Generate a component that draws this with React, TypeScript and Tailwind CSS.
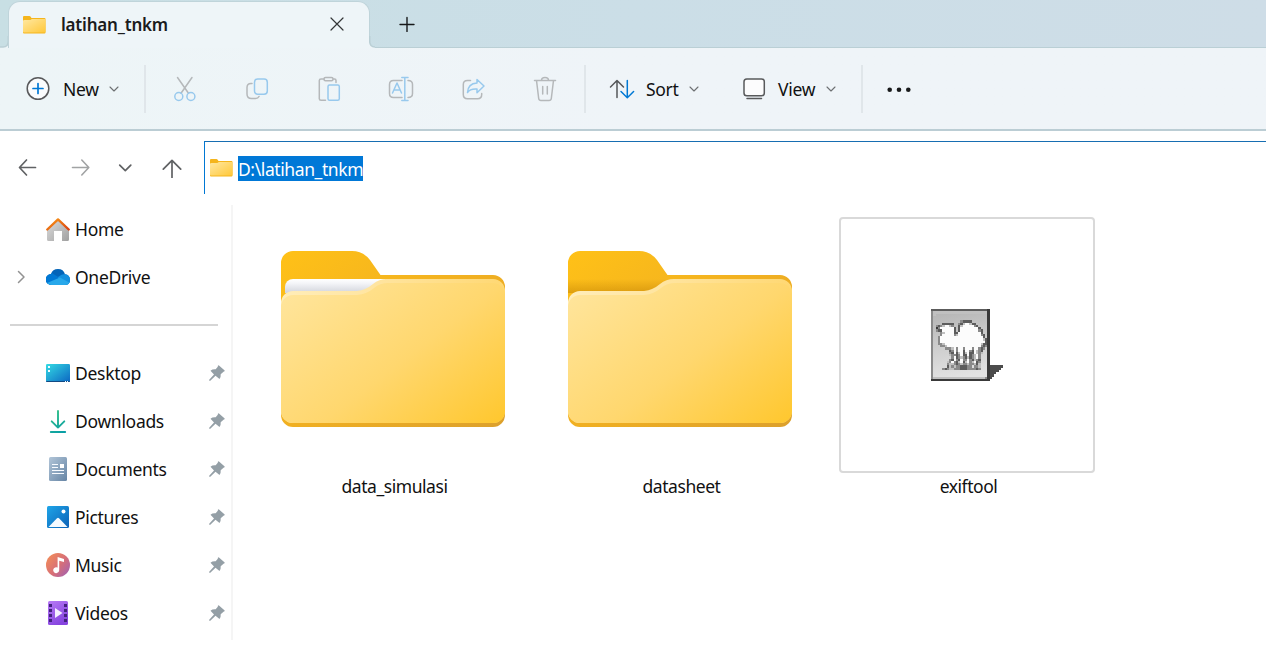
import type { ReactNode } from "react";

const BLUE = "#98c9ed";
const GRAY = "#b5b8ba";

function Glyph({ children, size = 26, className = "" }: { children: ReactNode; size?: number; className?: string }) {
  return (
    <svg
      width={size}
      height={size}
      viewBox={`${-size / 2} ${-size / 2} ${size} ${size}`}
      fill="none"
      strokeWidth="1.5"
      strokeLinecap="round"
      strokeLinejoin="round"
      className={"shrink-0 " + className}
    >
      {children}
    </svg>
  );
}

function Chevron({ className = "" }: { className?: string }) {
  return (
    <Glyph size={10} className={className}>
      <path d="M-4 -2 L0 2 L4 -2" stroke="#6d7072" strokeWidth="1.1" />
    </Glyph>
  );
}

function SmallFolder() {
  return (
    <svg width="23" height="18" viewBox="0 0 23 18" className="shrink-0">
      <defs>
        <linearGradient id="sf" x1="0" y1="0" x2="1" y2="1">
          <stop offset="0" stopColor="#ffe8a2" />
          <stop offset="1" stopColor="#ffc83a" />
        </linearGradient>
      </defs>
      <path d="M0 1Q0 0 1 0H6.5Q7.5 0 8.500 2H21.500Q22.500 2 22.500 3V16.500Q22.500 17.500 21.500 17.500H1Q0 17.500 0 16.500Z" fill="#f5b51c" />
      <path d="M0 5Q0 4 1.5 4H7Q8 4 8.700 3H22Q22.500 3 22.500 4V15.300Q22.500 16.400 22 16.400H0.500Q0 16.400 0 15.300Z" fill="url(#sf)" />
    </svg>
  );
}

function BigFolder({ id, paper = false }: { id: string; paper?: boolean }) {
  const g = (n: string) => `${id}-${n}`;
  return (
    <svg width="224" height="176" viewBox="0 0 224 176">
      <defs>
        <linearGradient id={g("back")} x1="0" y1="0" x2="1" y2="1">
          <stop offset="0" stopColor="#ffc117" />
          <stop offset="0.5" stopColor="#f1b021" />
          <stop offset="1" stopColor="#dca02c" />
        </linearGradient>
        <linearGradient id={g("front")} gradientUnits="userSpaceOnUse" x1="28" y1="20" x2="170" y2="205">
          <stop offset="0" stopColor="#ffe59c" />
          <stop offset="0.55" stopColor="#ffd76e" />
          <stop offset="1" stopColor="#ffc831" />
        </linearGradient>
        <linearGradient id={g("edge")} x1="0" y1="0" x2="1" y2="0">
          <stop offset="0" stopColor="#ffedb9" />
          <stop offset="0.45" stopColor="#ffe49e" />
          <stop offset="1" stopColor="#ffd873" />
        </linearGradient>
        <linearGradient id={g("shade")} x1="0" y1="0" x2="0" y2="1">
          <stop offset="0" stopColor="#b97a00" stopOpacity="0" />
          <stop offset="1" stopColor="#b97a00" stopOpacity="0.45" />
        </linearGradient>
        <linearGradient id={g("paper")} x1="0" y1="0" x2="0" y2="1">
          <stop offset="0" stopColor="#ffffff" />
          <stop offset="0.3" stopColor="#f4f5f8" />
          <stop offset="1" stopColor="#d2d4dc" />
        </linearGradient>
      </defs>
      <path
        d="M0 12A12 12 0 0 1 12 0H71Q82 0 89 9L99.500 24H212A12 12 0 0 1 224 36V164A12 12 0 0 1 212 176H12A12 12 0 0 1 0 164Z"
        fill={`url(#${g("back")})`}
      />
      {paper ? (
        <path d="M4 36A8 8 0 0 1 12 28H105L90 42H4Z" fill={`url(#${g("paper")})`} />
      ) : (
        <path d="M0 28H100L90 42H0Z" fill={`url(#${g("shade")})`} />
      )}
      <path
        d="M0 52A12 12 0 0 1 12 40H76Q85 39 92 33Q98 28 106 28H212A12 12 0 0 1 224 40V160A12 12 0 0 1 212 172H12A12 12 0 0 1 0 160Z"
        fill={`url(#${g("edge")})`}
      />
      <path
        d="M0 56A12 12 0 0 1 12 44H76Q86 43 93 37Q99 32 107 32H212A12 12 0 0 1 224 42V160A12 12 0 0 1 212 172H12A12 12 0 0 1 0 160Z"
        fill={`url(#${g("front")})`}
      />
    </svg>
  );
}

const CAMEL = [
  "dddddddddddddddddddddddddk",
  "mllllllllllllllllllllllllk",
  "ml.......................k",
  "m........................k",
  "m........................k",
  "m............mdddd.......k",
  "m....ddddd..mdlwwldd.....k",
  "m.mdmlwwlm..dlwwwwwmd....k",
  "m.kmwwwwwwd.dwwwwwwwwd...k",
  "m.mddwwwwwd.dwwwwwwwwmd..k",
  "m...mlwwwwddwwwwwwwwwwd..k",
  "m...mwwwwwmlwwwwwwwwwwmd.k",
  "m..mwwwwwwwwwwwwwwwwwwwd.k",
  "m..mwwwwwwwwwwwwwwwwwwwldk",
  "m..mwwwwwwwwwwwwwwwwwwwwdk",
  "m..mmlwwwwwwwwwwwwwwwwlddk",
  "m...mmlwwwwwwwwwwwwwwwmdmk",
  "m.....mmmlwmwwmwwwmwwmdm.k",
  "m.......dmwmwwdwwmdwlmd..k",
  "m.......mdwdlwdlwddwlml..k",
  "m.......lmmdmwddwdmlwm...k",
  "m........mwdmlmdldmlwm...k",
  "m.......mdwmdwmmwmdlmd...k",
  "m......lmwmdlwdlwmlwdm...k",
  "m......mllmdmlmmlmmldl...k",
  "m......dlmlmmdddmm.mml...k",
  "m....mdmllmmmdddmmmmdm...k",
  "m........................k",
  "m........................k",
  "m........................k",
  "mlllllllllllllllllllllllmk",
  "kkkkkkkkkkkkkkkkkkkkkkkkkk",
];

const SHADES: Record<string, string> = { k: "#393939", d: "#5c5c5c", m: "#8a8a8a", l: "#c0c0c0", w: "#fcfcfc" };

function CamelIcon() {
  return (
    <svg width="72" height="72" viewBox="0 0 32 32" shapeRendering="crispEdges">
      <defs>
        <linearGradient id="camel-bg" x1="0" y1="0" x2="0.15" y2="1">
          <stop offset="0" stopColor="#b2b2b2" />
          <stop offset="0.5" stopColor="#cccccc" />
          <stop offset="1" stopColor="#e2e2e2" />
        </linearGradient>
      </defs>
      <rect width="26" height="32" fill="url(#camel-bg)" />
      {CAMEL.flatMap((row, y) =>
        row.split("").map((c, x) => (SHADES[c] ? <rect key={`${x}-${y}`} x={x} y={y} width="1" height="1" fill={SHADES[c]} /> : null)),
      )}
      <path d="M26 25H32V26H31V27H30V28H29V29H28V30H27V31H26Z" fill="#4c4c4c" />
    </svg>
  );
}

function HomeIcon() {
  return (
    <svg width="24" height="24" viewBox="0 0 24 24">
      <defs>
        <linearGradient id="hw" x1="0" y1="0" x2="1" y2="1">
          <stop offset="0" stopColor="#dedede" />
          <stop offset="1" stopColor="#a0a0a0" />
        </linearGradient>
        <linearGradient id="hr" x1="0" y1="0" x2="1" y2="1">
          <stop offset="0" stopColor="#fb9a17" />
          <stop offset="1" stopColor="#d9400f" />
        </linearGradient>
      </defs>
      <path d="M1 11.500L12 2L23 11.500V22.500Q23 24 21.500 24H16V14H8V24H2.500Q1 24 1 22.500Z" fill="url(#hw)" />
      <path d="M1.300 12.500L12 2.400L22.700 12.500" fill="none" stroke="url(#hr)" strokeWidth="2.400" strokeLinecap="round" strokeLinejoin="round" />
    </svg>
  );
}

function CloudIcon() {
  return (
    <svg width="24" height="24" viewBox="0 0 24 24">
      <defs>
        <clipPath id="cloud">
          <path d="M5.500 20A5.500 5.500 0 0 1 5 9Q6.500 4 12 4Q17.500 4 19 9.300Q24 10 24 15Q24 20 19 20Z" />
        </clipPath>
      </defs>
      <g clipPath="url(#cloud)">
        <rect width="24" height="24" fill="#0364b8" />
        <path d="M0 8Q6 7 9 10L14 13L8 20H0Z" fill="#0078d4" />
        <path d="M12 12Q16 8.500 20 9L24 10V19L12 13Z" fill="#1490df" />
        <path d="M1 18L14 12.500L24 18V21H1Z" fill="#28a8ea" />
      </g>
    </svg>
  );
}

function DesktopIcon() {
  return (
    <svg width="24" height="24" viewBox="0 0 24 24">
      <defs>
        <linearGradient id="dk" x1="0" y1="0" x2="1" y2="1">
          <stop offset="0" stopColor="#34dbe4" />
          <stop offset="1" stopColor="#0c66c2" />
        </linearGradient>
      </defs>
      <rect y="3" width="24" height="18" rx="1.300" fill="url(#dk)" />
      <path d="M0 20H24Q24 21 23 21H1Q0 21 0 20Z" fill="#124a83" />
      <path d="M2 5h2v2h-2zM2 9h2v2h-2zM19 20h1v1h-1zM21 20h1v1h-1z" fill="#effcff" />
    </svg>
  );
}

function DownloadIcon() {
  return (
    <svg width="24" height="24" viewBox="0 0 24 24">
      <defs>
        <linearGradient id="dl" gradientUnits="userSpaceOnUse" x1="5" y1="0" x2="18" y2="24">
          <stop offset="0" stopColor="#36c583" />
          <stop offset="1" stopColor="#089da7" />
        </linearGradient>
      </defs>
      <path d="M12 2V18.500M5.700 12.300L12 18.600L18.300 12.300M4.800 23H19.200" fill="none" stroke="url(#dl)" strokeWidth="1.900" strokeLinecap="round" strokeLinejoin="round" />
    </svg>
  );
}

function DocumentIcon() {
  return (
    <svg width="24" height="24" viewBox="0 0 24 24">
      <defs>
        <linearGradient id="dc" x1="0" y1="0" x2="1" y2="1">
          <stop offset="0" stopColor="#b1c5d8" />
          <stop offset="1" stopColor="#6685a5" />
        </linearGradient>
      </defs>
      <rect x="3" y="0" width="18" height="24" rx="1.500" fill="url(#dc)" />
      <path d="M6 7.500h6M6 10.500h6M6 13.500h12M6 16.500h12" stroke="#f8fbff" strokeWidth="1.200" />
      <rect x="14" y="7" width="4" height="4" fill="#fff" />
    </svg>
  );
}

function PictureIcon() {
  return (
    <svg width="24" height="24" viewBox="0 0 24 24">
      <defs>
        <linearGradient id="pc" x1="0" y1="0" x2="1" y2="1">
          <stop offset="0" stopColor="#1fa5e8" />
          <stop offset="1" stopColor="#0b61b7" />
        </linearGradient>
      </defs>
      <rect x="1" y="1" width="22" height="22" rx="1.500" fill="url(#pc)" />
      <path d="M2.500 22L11 13.300Q12 12.300 13 13.300L21.500 22Z" fill="#f4faff" />
      <circle cx="17.500" cy="6.500" r="2" fill="#fff" />
    </svg>
  );
}

function MusicIcon() {
  return (
    <svg width="24" height="24" viewBox="0 0 24 24">
      <defs>
        <linearGradient id="mu" x1="0" y1="0.200" x2="1" y2="1">
          <stop offset="0" stopColor="#f18b59" />
          <stop offset="0.500" stopColor="#d76f78" />
          <stop offset="1" stopColor="#9b60b9" />
        </linearGradient>
      </defs>
      <circle cx="12" cy="12" r="12" fill="url(#mu)" />
      <path d="M11.600 4L18 6V9L13.200 7.700V17A3 3 0 1 1 11.600 14.500Z" fill="#fff" />
    </svg>
  );
}

function VideoIcon() {
  return (
    <svg width="24" height="24" viewBox="0 0 24 24">
      <defs>
        <linearGradient id="vd" x1="0" y1="0" x2="0.500" y2="1">
          <stop offset="0" stopColor="#b77af5" />
          <stop offset="1" stopColor="#8644df" />
        </linearGradient>
      </defs>
      <rect x="2" y="0" width="20" height="24" rx="1.500" fill="url(#vd)" />
      <path
        d="M3 3h3v3h-3zM3 8h3v3h-3zM3 13h3v3h-3zM3 18h3v3h-3zM18 3h3v3h-3zM18 8h3v3h-3zM18 13h3v3h-3zM18 18h3v3h-3z"
        fill="#43217d"
      />
      <path d="M9 7L16.500 12L9 17Z" fill="#f5efff" />
    </svg>
  );
}

function Pin() {
  return (
    <svg width="16" height="16" viewBox="0 0 16 16" fill="#949fa6" className="shrink-0">
      <path d="M9.700 0.300L15.700 5.600Q16 6.700 14.500 6.700L11.700 9.200Q12 12.500 10.500 14L6.500 10.800L1.300 15.800L0.200 15.700V14.700L5 9.500L1.500 5.700Q3.500 4 6.700 4.300L8.800 1.800Q8.500 0.300 9.700 0.300Z" />
    </svg>
  );
}

const PINNED = [
  { label: "Desktop", icon: <DesktopIcon /> },
  { label: "Downloads", icon: <DownloadIcon /> },
  { label: "Documents", icon: <DocumentIcon /> },
  { label: "Pictures", icon: <PictureIcon /> },
  { label: "Music", icon: <MusicIcon /> },
  { label: "Videos", icon: <VideoIcon /> },
];

function NavRow({ label, icon, pinned, expandable }: { label: string; icon: ReactNode; pinned?: boolean; expandable?: boolean }) {
  return (
    <div className="flex h-12 items-center pr-[6px]">
      <div className="flex w-[46px] shrink-0 pl-[14px]">
        {expandable && (
          <Glyph size={14}>
            <path d="M-2.500 -5.500L3 0L-2.500 5.500" stroke="#929292" />
          </Glyph>
        )}
      </div>
      {icon}
      <span className="ml-[5px] flex-1 whitespace-nowrap">{label}</span>
      {pinned && <Pin />}
    </div>
  );
}

function Divider() {
  return <div className="h-12 w-[2px] shrink-0 bg-[#e0e6ea]" />;
}

function Tile({ label, children, framed }: { label: string; children: ReactNode; framed?: boolean }) {
  return (
    <div className="flex w-[257px] flex-col items-center">
      <div
        className={
          framed
            ? "mr-[3px] flex h-[256px] w-[256px] items-center justify-center rounded-[4px] border-2 border-[#d9d9d9]"
            : "flex h-[256px] w-[256px] justify-center pt-[34px] pr-[4px]"
        }
      >
        {children}
      </div>
      <span className="mt-px leading-6 tracking-[-0.45px]">{label}</span>
    </div>
  );
}

export default function App() {
  return (
    <div className="flex h-[650px] w-[1266px] flex-col overflow-hidden bg-white font-['Noto_Sans',sans-serif] text-[17.5px] tracking-[-0.3px] text-[#111]">
      <header className="flex h-12 shrink-0 items-end border-b border-[#dfe9ec] bg-linear-to-r from-[#c8dfe4] via-[#cbdee7] to-[#cedde7]">
        <svg width="9" height="12" viewBox="0 0 9 12" className="-mb-px shrink-0">
          <path d="M9 2V12H0V11H3Q8.500 11 8.500 5V2Z" fill="#eef5f8" />
          <path d="M0 11H3Q8.300 11 8.300 5V0" fill="none" stroke="#bacfd5" strokeWidth="1.500" />
        </svg>
        <div className="-mb-px -ml-px flex h-[47px] w-[362px] items-center rounded-t-[12px] border-x border-t border-[#bfd4da] bg-[#eef5f8] pl-[14px]">
          <SmallFolder />
          <span className="ml-[15px] flex-1 text-[17px] font-semibold tracking-[-0.2px] text-[#1a1b1c]">latihan_tnkm</span>
          <Glyph size={16} className="mr-[24px] mb-[2px]">
            <path d="M-6 -6L6 6M6 -6L-6 6" stroke="#333637" strokeWidth="1.200" />
          </Glyph>
        </div>
        <svg width="6" height="12" viewBox="0 0 6 12" className="-mb-px -ml-px shrink-0">
          <path d="M0 0V12H6V11Q1 11 1 5V0Z" fill="#eef5f8" />
          <path d="M6 11Q0.700 11 0.700 5V0" fill="none" stroke="#bacfd5" strokeWidth="1.500" />
        </svg>
        <div className="-mb-px flex h-12 flex-1 items-center border-b-[1.500px] border-[#bacfd5] pl-[24px]">
          <Glyph size={16}>
            <path d="M0 -6.500V7.500M-7 0.500H7" stroke="#17191a" strokeWidth="1.400" />
          </Glyph>
        </div>
      </header>

      <div className="flex h-[83px] shrink-0 items-center border-b-2 border-[#bbcdd4] bg-linear-to-r from-[#edf5f7] via-[#eff4f8] to-[#eff4f8]">
        <div className="flex w-[144px] shrink-0 items-center pl-[25px]">
          <Glyph>
            <circle r="10.800" cy="-0.500" fill="#fafcfd" stroke="#58595b" />
            <path d="M0 -5.500V4.500M-5 -0.500H5" stroke="#0078d4" strokeWidth="1.700" />
          </Glyph>
          <span className="ml-[12px] w-[46px] pt-[2px]">New</span>
          <Chevron />
        </div>
        <Divider />
        <div className="flex flex-1 items-center gap-[46px] pl-[26px]">
          <Glyph>
            <path d="M-7.500 -11.500L3.500 4.300M7 -11.500L-4 4.300" stroke={GRAY} />
            <g stroke={BLUE}><circle cx="-6.200" cy="7.500" r="4" /><circle cx="5.900" cy="7.500" r="4" /></g>
          </Glyph>
          <Glyph>
            <path d="M-5 -5.500H-6Q-10 -5.500 -10 -1.500V5Q-10 9.500 -5.500 9.500H-1.500Q1 9.500 2 7.500" stroke={GRAY} />
            <rect x="-2.500" y="-10" width="12.800" height="15.300" rx="3.200" stroke={BLUE} />
          </Glyph>
          <Glyph>
            <path d="M-5 -10H-8Q-9.700 -10 -9.700 -8.500V9.700Q-9.700 11.200 -8 11.200H-3.500M4.500 -10H5.500Q7 -10 7 -8.500V-6.500" stroke={GRAY} />
            <rect x="-5" y="-11.500" width="9" height="3.200" rx="1.500" stroke={GRAY} />
            <rect x="-1" y="-4" width="11.300" height="15.300" rx="1.500" stroke={BLUE} />
          </Glyph>
          <Glyph>
            <path d="M1 -8.500H-7.500Q-11.500 -8.500 -11.500 -4.500V4.500Q-11.500 8.500 -7.500 8.500H1M7 -8.500Q11.500 -8.500 11.500 -4.500V4.500Q11.500 8.500 7 8.500" stroke={GRAY} />
            <path d="M3.800 -11V11M0.800 -11.500H7M0.800 11.500H7M-8.500 4L-4 -6L0.500 4M-7 1H-1" stroke={BLUE} />
          </Glyph>
          <Glyph>
            <path d="M-2.500 -8.500H-5.500Q-9.700 -8.500 -9.700 -4.500V5.500Q-9.700 9.700 -5.500 9.700H4.500Q8.700 9.700 8.700 5.500V4.500" stroke={GRAY} />
            <path d="M4 -9.500L11 -3L4 3.700V0Q-3 -0.500 -5.500 3.500Q-5 -5.500 4 -6Z" stroke={BLUE} />
          </Glyph>
          <Glyph>
            <path d="M-10.500 -8.500H10.500M-3.500 -8.500Q-3.500 -11.500 0 -11.500Q3.500 -11.500 3.500 -8.500M-8.500 -8.500L-6.300 9.500Q-6 11.500 -4 11.500H4Q6 11.500 6.300 9.500L8.500 -8.500M-2.300 -2.500V5M2.300 -2.500V5" stroke={GRAY} />
          </Glyph>
        </div>
        <Divider />
        <div className="flex w-[275px] shrink-0 items-center pl-[23px]">
          <Glyph>
            <path d="M-5 8.500V-8.500M-11.500 -2L-5 -8.500L1.500 -2" stroke="#555759" />
            <path d="M5.300 -8.500V8.500M-1 2.500L5.300 8.800L11.600 2.500" stroke="#0078d4" />
          </Glyph>
          <span className="ml-[11px] w-[43px] pt-[2px]">Sort</span>
          <Chevron />
          <Glyph className="ml-[42px]">
            <rect x="-10" y="-10" width="20.300" height="16.800" rx="2.800" stroke="#58595b" fill="#fcfcfd" />
            <path d="M-7 9.600H7.500" stroke="#58595b" />
          </Glyph>
          <span className="ml-[11px] w-[48px] pt-[2px]">View</span>
          <Chevron />
        </div>
        <Divider />
        <div className="w-[403px] shrink-0 pl-[23px]">
          <Glyph>
            <g fill="#191a1b"><circle cx="-9.300" cy="0.800" r="2.300" /><circle cy="0.800" r="2.300" /><circle cx="9.300" cy="0.800" r="2.300" /></g>
          </Glyph>
        </div>
      </div>

      <div className="flex h-[74px] shrink-0">
        <div className="flex w-[204px] shrink-0 items-center pl-[18px]">
          <Glyph size={20}>
            <path d="M7.500 -0.500H-8M-1.500 -8L-8.500 -0.500L-1.500 7" stroke="#606264" strokeWidth="1.700" />
          </Glyph>
          <Glyph size={20} className="ml-[33px]">
            <path d="M-8.500 -0.500H7.500M0.800 -8L7.800 -0.500L0.800 7" stroke="#a1a3a4" strokeWidth="1.600" />
          </Glyph>
          <Glyph size={20} className="ml-[24px]">
            <path d="M-5.300 -2.800L0.300 2.700L5.800 -2.800" stroke="#606264" strokeWidth="1.700" />
          </Glyph>
          <Glyph size={20} className="ml-[27px]">
            <path d="M0 9.800V-7M-8.700 1.200L0 -7.700L8.700 1.200" stroke="#606264" strokeWidth="1.700" />
          </Glyph>
        </div>
        <div className="mt-[10px] flex h-[53px] flex-1 items-center border-t border-l border-t-[#176eb2] border-l-[#0078d4] pl-[5px]">
          <SmallFolder />
          <span className="ml-[5px] flex h-[25px] w-[125px] items-center bg-[#0078d7] pt-[2px] tracking-[-0.4px] text-white">D:\latihan_tnkm</span>
        </div>
      </div>

      <main className="flex flex-1">
        <nav className="h-[435px] w-[233px] shrink-0 border-r-2 border-[#f5f5f5]">
          <NavRow label="Home" icon={<HomeIcon />} />
          <NavRow label="OneDrive" icon={<CloudIcon />} expandable />
          <div className="mt-[23px] mb-[23px] ml-[10px] h-[2px] w-[208px] bg-[#d5d5d5]" />
          {PINNED.map((p) => (
            <NavRow key={p.label} label={p.label} icon={p.icon} pinned />
          ))}
        </nav>
        <section className="flex gap-[30px] pt-[12px] pl-[33px]">
          <Tile label="data_simulasi"><BigFolder id="simulasi" paper /></Tile>
          <Tile label="datasheet"><BigFolder id="datasheet" /></Tile>
          <Tile label="exiftool" framed><CamelIcon /></Tile>
        </section>
      </main>
    </div>
  );
}
